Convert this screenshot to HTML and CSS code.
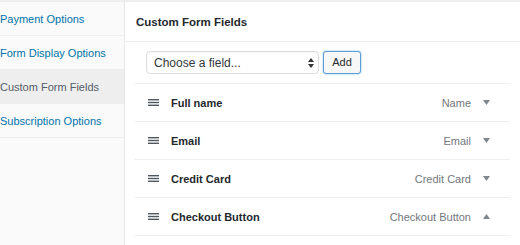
FILE: index.html
```html
<!DOCTYPE html>
<html>
<head>
<meta charset="utf-8">
<link rel="stylesheet" href="styles.css">
</head>
<body>
<div class="page">
  <nav class="sidebar">
    <a class="nav-item">Payment Options</a>
    <a class="nav-item">Form Display Options</a>
    <a class="nav-item active">Custom Form Fields</a>
    <a class="nav-item">Subscription Options</a>
  </nav>
  <main class="panel">
    <h2 class="panel-title">Custom Form Fields</h2>
    <div class="content">
      <div class="add-row">
        <div class="select-wrap">
          <select class="field-select">
            <option>Choose a field...</option>
          </select>
          <svg class="select-arrows" width="6" height="10" viewBox="0 0 6 10"><path d="M3 0 L6 4 L0 4 Z M0 6 L6 6 L3 10 Z" fill="#333"/></svg>
        </div>
        <button class="add-btn">Add</button>
      </div>
      <ul class="fields">
        <li class="field-row">
          <svg class="handle" width="11" height="7" viewBox="0 0 11 7"><rect x="0" y="0" width="11" height="1.4" fill="#50575e"/><rect x="0" y="2.8" width="11" height="1.4" fill="#50575e"/><rect x="0" y="5.6" width="11" height="1.4" fill="#50575e"/></svg>
          <span class="label">Full name</span>
          <span class="type">Name</span>
          <svg class="toggle" width="7" height="5" viewBox="0 0 7 5"><path d="M0 0 L7 0 L3.5 5 Z" fill="#82878c"/></svg>
        </li>
        <li class="field-row">
          <svg class="handle" width="11" height="7" viewBox="0 0 11 7"><rect x="0" y="0" width="11" height="1.4" fill="#50575e"/><rect x="0" y="2.8" width="11" height="1.4" fill="#50575e"/><rect x="0" y="5.6" width="11" height="1.4" fill="#50575e"/></svg>
          <span class="label">Email</span>
          <span class="type">Email</span>
          <svg class="toggle" width="7" height="5" viewBox="0 0 7 5"><path d="M0 0 L7 0 L3.5 5 Z" fill="#82878c"/></svg>
        </li>
        <li class="field-row">
          <svg class="handle" width="11" height="7" viewBox="0 0 11 7"><rect x="0" y="0" width="11" height="1.4" fill="#50575e"/><rect x="0" y="2.8" width="11" height="1.4" fill="#50575e"/><rect x="0" y="5.6" width="11" height="1.4" fill="#50575e"/></svg>
          <span class="label">Credit Card</span>
          <span class="type">Credit Card</span>
          <svg class="toggle" width="7" height="5" viewBox="0 0 7 5"><path d="M0 0 L7 0 L3.5 5 Z" fill="#82878c"/></svg>
        </li>
        <li class="field-row">
          <svg class="handle" width="11" height="7" viewBox="0 0 11 7"><rect x="0" y="0" width="11" height="1.4" fill="#50575e"/><rect x="0" y="2.8" width="11" height="1.4" fill="#50575e"/><rect x="0" y="5.6" width="11" height="1.4" fill="#50575e"/></svg>
          <span class="label">Checkout Button</span>
          <span class="type">Checkout Button</span>
          <svg class="toggle" width="7" height="5" viewBox="0 0 7 5"><path d="M3.5 0 L7 5 L0 5 Z" fill="#82878c"/></svg>
        </li>
      </ul>
    </div>
  </main>
</div>
</body>
</html>
```
FILE: styles.css
```css
* { box-sizing: border-box; }

html, body {
  margin: 0;
  padding: 0;
  width: 520px;
  height: 245px;
  overflow: hidden;
  background: #fff;
  font-family: "Liberation Sans", Arial, sans-serif;
}

.page {
  display: flex;
  height: 245px;
  border-top: 2px solid #eeeeee;
}

.sidebar {
  width: 125px;
  flex: none;
  background: #fafafa;
  border-right: 1px solid #e8e8e8;
  display: flex;
  flex-direction: column;
}

.nav-item {
  display: flex;
  align-items: center;
  height: 34px;
  padding-left: 0;
  font-size: 11px;
  color: #0073aa;
  border-bottom: 1px solid #eeeeee;
  white-space: nowrap;
}

.nav-item.active {
  background: #eeeeee;
  color: #555d66;
}

.panel {
  flex: 1;
  display: flex;
  flex-direction: column;
  background: #fff;
}

.panel-title {
  margin: 0;
  height: 40px;
  display: flex;
  align-items: center;
  padding-left: 11px;
  font-size: 11.5px;
  font-weight: bold;
  color: #23282d;
  border-bottom: 1px solid #eeeeee;
}

.content {
  padding: 0 10px 0 10px;
}

.add-row {
  display: flex;
  align-items: center;
  height: 42px;
  padding-left: 11px;
  padding-top: 0;
  border-bottom: 1px solid #eeeeee;
  gap: 4px;
}

.select-wrap {
  position: relative;
  width: 173px;
  height: 23px;
}

.field-select {
  -webkit-appearance: none;
  appearance: none;
  width: 100%;
  height: 100%;
  border: 1px solid #dddddd;
  border-radius: 4px;
  background: #fff;
  box-shadow: inset 0 1px 2px rgba(0,0,0,0.04);
  font-family: "Liberation Sans", Arial, sans-serif;
  font-size: 12px;
  color: #32373c;
  padding: 0 0 0 7px;
  margin: 0;
}

.select-arrows {
  position: absolute;
  right: 5px;
  top: 7px;
}

.add-btn {
  width: 38px;
  height: 23px;
  margin: 0 0 1px 0;
  padding: 0;
  border: 1px solid #5b9dd9;
  border-radius: 3px;
  background: #f7f7f7;
  box-shadow: 0 0 2px rgba(30,140,190,0.6);
  font-family: "Liberation Sans", Arial, sans-serif;
  font-size: 11px;
  color: #23282d;
}

.fields {
  list-style: none;
  margin: 0;
  padding: 0;
}

.field-row {
  display: flex;
  align-items: center;
  height: 38px;
  padding: 0 20px 0 13px;
  border-bottom: 1px solid #eeeeee;
}

.handle {
  flex: none;
  margin-right: 12px;
}

.label {
  flex: 1;
  font-size: 11px;
  font-weight: bold;
  color: #23282d;
}

.type {
  font-size: 11px;
  color: #72777c;
  margin-right: 12px;
}

.toggle {
  flex: none;
}
```
